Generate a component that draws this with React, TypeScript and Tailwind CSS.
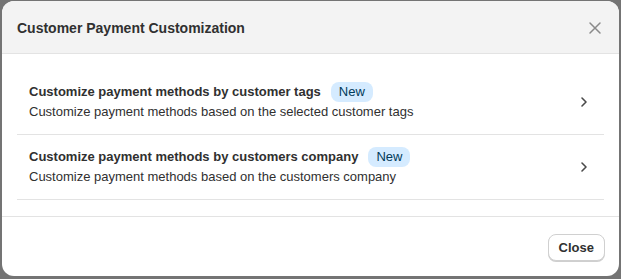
import React from 'react';

interface Option {
  title: string;
  description: string;
}

const options: Option[] = [
  {
    title: 'Customize payment methods by customer tags',
    description: 'Customize payment methods based on the selected customer tags'
  },
  {
    title: 'Customize payment methods by customers company',
    description: 'Customize payment methods based on the customers company'
  }
];

const ChevronRight = () => (
  <svg width="16" height="16" viewBox="0 0 16 16" fill="none">
    <path d="M6 4l4 4-4 4" stroke="#4a4a4a" strokeWidth="1.6" strokeLinecap="round" strokeLinejoin="round" />
  </svg>
);

const CloseIcon = () => (
  <svg width="14" height="14" viewBox="0 0 14 14" fill="none">
    <path d="M2 2l10 10M12 2L2 12" stroke="#8a8a8a" strokeWidth="1.5" strokeLinecap="round" />
  </svg>
);

export default function App() {
  return (
    <div
      className="w-[621px] h-[279px] bg-[#747474] pt-[1px] pl-[2px] pr-[2px] overflow-hidden"
      style={{ fontFamily: '"Liberation Sans", Arial, sans-serif' }}
    >
      <div className="w-[617px] h-[275px] bg-white rounded-xl overflow-hidden flex flex-col">
        <div className="h-[53px] bg-[#f3f3f3] border-b border-[#e3e3e3] flex items-center justify-between pl-[15px] pr-[14px] pt-[2px] shrink-0">
          <h2 className="text-[14px] font-bold text-[#303030]">Customer Payment Customization</h2>
          <button className="w-5 h-5 flex items-center justify-center">
            <CloseIcon />
          </button>
        </div>

        <div className="px-[15px] pt-4 pb-4 border-b border-[#e3e3e3]">
          {options.map((option) => (
            <div
              key={option.title}
              className="flex items-center justify-between pl-3 pr-3 py-3 border-b border-[#e3e3e3] h-[65px]"
            >
              <div>
                <div className="flex items-center gap-[10px] h-5">
                  <span className="text-[13px] font-bold text-[#303030]">{option.title}</span>
                  <span className="bg-[#d5ebff] text-[#003a5a] text-[13px] leading-5 px-2 rounded-lg">New</span>
                </div>
                <div className="text-[13px] text-[#303030] leading-5">{option.description}</div>
              </div>
              <ChevronRight />
            </div>
          ))}
        </div>

        <div className="flex justify-end px-[14px] pt-[17px]">
          <button className="h-[27px] px-[10px] rounded-lg border border-[#d0d0d0] bg-white shadow-[0_1px_0_#cfcfcf] text-[13px] font-bold text-[#303030]">
            Close
          </button>
        </div>
      </div>
    </div>
  );
}
